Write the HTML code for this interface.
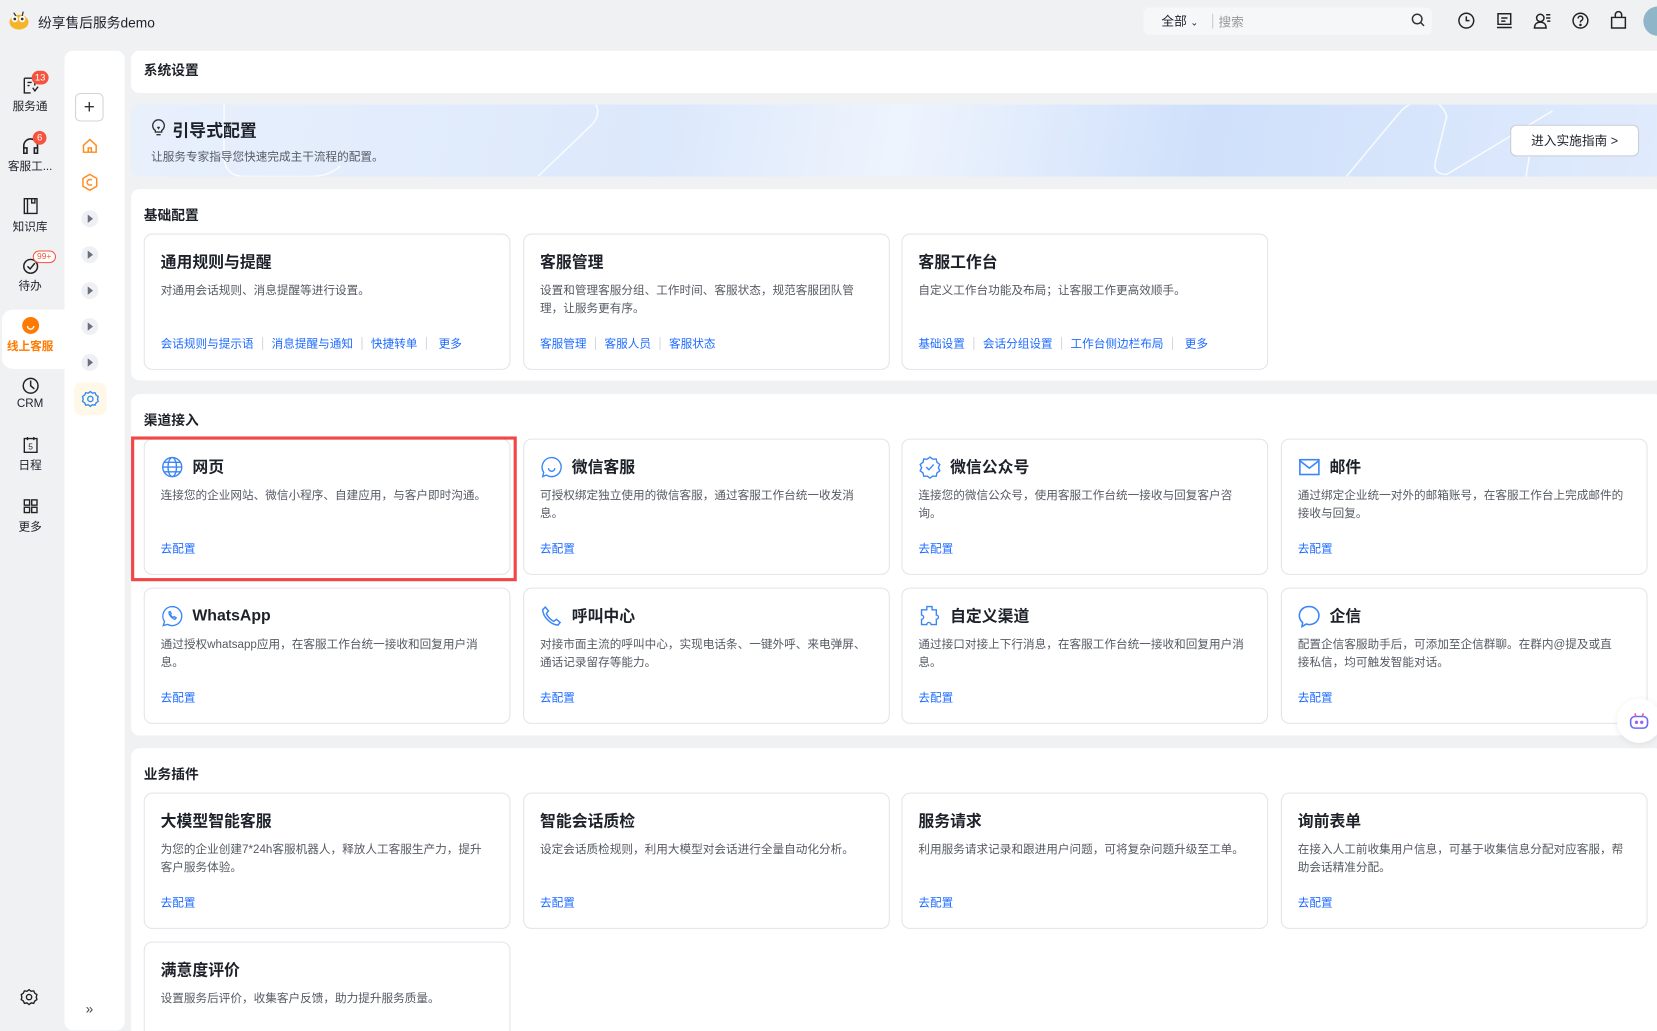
<!DOCTYPE html>
<html><head><meta charset="utf-8"><style>
*{box-sizing:border-box;margin:0;padding:0}
html,body{width:1657px;height:1031px;overflow:hidden;background:#f0f1f3}
body{font-family:"Liberation Sans","Noto Sans CJK SC",sans-serif;color:#1d2129}
#s{position:absolute;left:0;top:0;width:1568px;height:976px;overflow:hidden;transform:scale(1.0568);transform-origin:0 0}
.a{position:absolute}
.sec{position:absolute;left:124px;width:1450px;background:#fff;border-radius:8px}
.st{position:absolute;left:12px;font-size:13px;font-weight:bold}
.card{position:absolute;width:347px;height:129px;border:1px solid #e3e4ea;border-radius:8px;background:#fff}
.ct{position:absolute;left:15px;top:15px;font-size:15px;font-weight:bold;white-space:nowrap}
.cd{position:absolute;left:15px;top:45px;right:22px;font-size:11px;line-height:17px;color:#555a63}
.cl{position:absolute;left:15px;top:95px;font-size:11px;color:#1e6bff;white-space:nowrap}
.cl i{display:inline-block;width:1px;height:12px;background:#d6d8de;margin:0 8px;vertical-align:-2px}
.ic{position:absolute;left:15px;top:15px}
.ct2{left:45px}
.nav{position:absolute;left:0;width:57px;text-align:center;font-size:11px;color:#1d2129}
.nav svg{display:block;margin:0 auto 2px}
.badge{position:absolute;background:#f5533d;color:#fff;font-size:9px;border-radius:8px;padding:0 3px;line-height:13px;min-width:13px;text-align:center}
.tri{position:absolute;left:77px;width:16px;height:16px;border-radius:50%;background:#eef0f5}
.tri:after{content:"";position:absolute;left:6px;top:4px;border-left:5px solid #6b6f78;border-top:4px solid transparent;border-bottom:4px solid transparent}
</style></head><body><div id="s">
<svg class="a" style="left:7px;top:8px" width="22" height="22" viewBox="0 0 22 22"><ellipse cx="11" cy="13" rx="9" ry="7" fill="#f5b42a"/><circle cx="7" cy="10" r="3" fill="#fff"/><circle cx="14" cy="10" r="3" fill="#fff"/><circle cx="7" cy="10" r="1.3" fill="#333"/><circle cx="14" cy="10" r="1.3" fill="#333"/><path d="M6 4l2 3M15 3l-1 4" stroke="#333" stroke-width="1.2"/></svg>
<div class="a" style="left:36px;top:11px;font-size:13px">纷享售后服务demo</div>
<div class="a" style="left:1082px;top:7px;width:273px;height:26px;background:#f6f7f9;border-radius:5px"></div>
<div class="a" style="left:1099px;top:11px;font-size:12px">全部 <span style="font-size:9px">⌄</span></div>
<div class="a" style="left:1147px;top:13px;width:1px;height:14px;background:#ccc"></div>
<div class="a" style="left:1153px;top:12px;font-size:12px;color:#999">搜索</div>
<svg class="a" style="left:1335px;top:12px" width="14" height="14" viewBox="0 0 14 14" fill="none" stroke="#333" stroke-width="1.4"><circle cx="6" cy="6" r="4.5"/><path d="M9.5 9.5l3 3"/></svg>
<svg class="a" style="left:1379px;top:11px" width="17" height="17" viewBox="0 0 17 17" fill="none" stroke="#222" stroke-width="1.4"><circle cx="8.5" cy="8.5" r="7"/><path d="M8.5 4.5v4h3"/></svg>
<svg class="a" style="left:1415px;top:11px" width="17" height="17" viewBox="0 0 17 17" fill="none" stroke="#222" stroke-width="1.4"><path d="M2.5 2h12v10h-12zM1.5 15h14M5.5 6h6M5.5 9h4"/></svg>
<svg class="a" style="left:1451px;top:11px" width="17" height="17" viewBox="0 0 17 17" fill="none" stroke="#222" stroke-width="1.4"><circle cx="6.5" cy="6" r="3.5"/><path d="M1 15.5c0-4 2.5-5.5 5.5-5.5s5.5 1.5 5.5 5.5zM12 3h4M12 6h4M13 9h3"/></svg>
<svg class="a" style="left:1487px;top:11px" width="17" height="17" viewBox="0 0 17 17" fill="none" stroke="#222" stroke-width="1.4"><circle cx="8.5" cy="8.5" r="7"/><path d="M6.3 6.5a2.2 2.2 0 1 1 3 2c-.8.4-.8 1-.8 1.8"/><circle cx="8.5" cy="12.5" r=".5" fill="#222"/></svg>
<svg class="a" style="left:1523px;top:10px" width="17" height="18" viewBox="0 0 17 18" fill="none" stroke="#222" stroke-width="1.4"><path d="M2 6.5h13v10H2zM5.5 6.5V4a3 3 0 0 1 6 0v2.5"/></svg>
<div class="a" style="left:1555px;top:6px;width:28px;height:28px;border-radius:50%;background:#8fb6c8"></div>
<div class="a" style="left:2px;top:293px;width:60px;height:56px;background:#fff;border-radius:10px 0 0 10px"></div>
<div class="nav" style="top:72px"><svg width="18" height="18" viewBox="0 0 18 18" fill="none" stroke="#222" stroke-width="1.3"><path d="M3 2h10v7M3 2v14h6M6 6h4M6 9h2"/><path d="M11 11l2 3 3-4"/></svg>服务通</div>
<div class="badge" style="left:30px;top:67px">13</div>
<div class="nav" style="top:129px"><svg width="18" height="18" viewBox="0 0 18 18" fill="none" stroke="#222" stroke-width="1.5"><path d="M2.5 14V9a6.5 6.5 0 0 1 13 0v5M2.5 11h3v5h-3zM12.5 11h3v5h-3z"/></svg>客服工...</div>
<div class="badge" style="left:31px;top:124px">6</div>
<div class="nav" style="top:186px"><svg width="18" height="18" viewBox="0 0 18 18" fill="none" stroke="#222" stroke-width="1.3"><path d="M3 2h12v14H3zM6 2v14M10 2v4h3V2"/></svg>知识库</div>
<div class="nav" style="top:242px"><svg width="18" height="18" viewBox="0 0 18 18" fill="none" stroke="#222" stroke-width="1.4"><circle cx="9" cy="10" r="6.5"/><path d="M6 10l2.5 2.5L13 7"/></svg>待办</div>
<div class="badge" style="left:31px;top:237px;background:#fff;color:#f5533d;border:1px solid #f5533d;font-size:8px;line-height:10px">99+</div>
<div class="nav" style="top:299px;color:#ff7a00;font-weight:bold"><svg width="18" height="18" viewBox="0 0 18 18"><circle cx="9" cy="9" r="8" fill="#ff7a00"/><path d="M6 9.5a3 3 0 0 0 6 0" stroke="#fff" stroke-width="1.3" fill="none"/></svg>线上客服</div>
<div class="nav" style="top:356px"><svg width="18" height="18" viewBox="0 0 18 18" fill="none" stroke="#222" stroke-width="1.4"><circle cx="9" cy="9" r="7"/><path d="M9 4v5l3.5 3"/></svg>CRM</div>
<div class="nav" style="top:412px"><svg width="18" height="18" viewBox="0 0 18 18" fill="none" stroke="#222" stroke-width="1.3"><path d="M3 3h12v13H3zM6 1.5v3M12 1.5v3"/><text x="9" y="13.5" font-size="8" text-anchor="middle" fill="#222" stroke="none" font-family="Liberation Sans">5</text></svg>日程</div>
<div class="nav" style="top:470px"><svg width="18" height="18" viewBox="0 0 18 18" fill="none" stroke="#222" stroke-width="1.3"><rect x="3" y="3" width="5" height="5"/><rect x="10" y="3" width="5" height="5"/><rect x="3" y="10" width="5" height="5"/><rect x="10" y="10" width="5" height="5"/></svg>更多</div>
<svg class="a" style="left:19px;top:935px" width="17" height="17" viewBox="0 0 17 17" fill="none" stroke="#222" stroke-width="1.3"><circle cx="8.5" cy="8.5" r="2.5"/><path d="M8.5 1.5l2 1.5 2.4-.4 1 2.2 2 1.3-.6 2.4.6 2.4-2 1.3-1 2.2-2.4-.4-2 1.5-2-1.5-2.4.4-1-2.2-2-1.3.6-2.4-.6-2.4 2-1.3 1-2.2 2.4.4z"/></svg>
<div class="a" style="left:61px;top:48px;width:57px;height:927px;background:#fff;border-radius:8px"></div>
<div class="a" style="left:71px;top:88px;width:27px;height:27px;border:1px solid #d0d3da;border-radius:5px;text-align:center;line-height:24px;font-size:18px;color:#333">+</div>
<svg class="a" style="left:77px;top:130px" width="16" height="16" viewBox="0 0 16 16" fill="none" stroke="#ff8a1f" stroke-width="1.4"><path d="M2 7.5L8 2l6 5.5V14H2zM6.5 14v-4h3v4"/></svg>
<svg class="a" style="left:77px;top:164px" width="16" height="17" viewBox="0 0 16 17" fill="none" stroke="#ff8a1f" stroke-width="1.4"><path d="M8 1l6.5 3.8v7.4L8 16l-6.5-3.8V4.8z"/><path d="M10 6.5a2.7 2.7 0 1 0 0 4"/></svg>
<div class="tri" style="top:199px"></div><div class="tri" style="top:233px"></div><div class="tri" style="top:267px"></div><div class="tri" style="top:301px"></div><div class="tri" style="top:335px"></div>
<div class="a" style="left:70px;top:362px;width:31px;height:31px;background:#fff7e8;border-radius:7px"></div>
<svg class="a" style="left:77px;top:369px" width="17" height="17" viewBox="0 0 17 17" fill="none" stroke="#2f8cf5" stroke-width="1.3"><circle cx="8.5" cy="8.5" r="2.5"/><path d="M8.5 1.5l2 1.5 2.4-.4 1 2.2 2 1.3-.6 2.4.6 2.4-2 1.3-1 2.2-2.4-.4-2 1.5-2-1.5-2.4.4-1-2.2-2-1.3.6-2.4-.6-2.4 2-1.3 1-2.2 2.4.4z"/></svg>
<div class="a" style="left:81px;top:947px;font-size:13px;color:#444">»</div>
<div class="sec" style="top:48px;height:40px"><div class="st" style="top:8px">系统设置</div></div>
<div class="sec" style="top:99px;height:68px;background:linear-gradient(100deg,#e8f0fc 0%,#dce8fb 35%,#eef4fd 50%,#cfe0fb 70%,#e0ebfc 100%);overflow:hidden">
<svg class="a" style="left:0;top:0" width="1450" height="68" fill="none" stroke="#fff" stroke-width="1.5" opacity=".8"><path d="M88 0v48q0 20 20 20h60q20 0 30 -10M440 0q5 10-5 20l-50 48M1150 68l50-60q10-12 25-12t20 15l-10 40q-5 15 10 15l100-60M1320 68l5-30"/></svg>
<svg class="a" style="left:18px;top:12px" width="16" height="18" viewBox="0 0 16 18" fill="none" stroke="#333" stroke-width="1.3"><path d="M5 12.5a5.5 5.5 0 1 1 6 0V14H5zM6 16.5h4M7 9l1 1.5 1-1.5"/></svg>
<div class="a" style="left:39px;top:11px;font-size:16px;font-weight:bold;color:#1d2129">引导式配置</div>
<div class="a" style="left:19px;top:41px;font-size:11px;color:#555a63">让服务专家指导您快速完成主干流程的配置。</div>
<div class="a" style="left:1305px;top:19px;width:122px;height:30px;background:#fff;border:1px solid #c9cdd4;border-radius:6px;font-size:12px;text-align:center;line-height:28px">进入实施指南 &gt;</div>
</div>
<div class="sec" style="top:179px;height:181px"><div class="st" style="top:14px">基础配置</div>
<div class="card" style="left:12px;top:42px"><div class="ct">通用规则与提醒</div><div class="cd">对通用会话规则、消息提醒等进行设置。</div><div class="cl">会话规则与提示语<i></i>消息提醒与通知<i></i>快捷转单<i></i> 更多</div></div>
<div class="card" style="left:371px;top:42px"><div class="ct">客服管理</div><div class="cd">设置和管理客服分组、工作时间、客服状态，规范客服团队管理，让服务更有序。</div><div class="cl">客服管理<i></i>客服人员<i></i>客服状态</div></div>
<div class="card" style="left:729px;top:42px"><div class="ct">客服工作台</div><div class="cd">自定义工作台功能及布局；让客服工作更高效顺手。</div><div class="cl">基础设置<i></i>会话分组设置<i></i>工作台侧边栏布局<i></i> 更多</div></div>
</div>
<div class="sec" style="top:373px;height:323px"><div class="st" style="top:14px">渠道接入</div>
<div class="card" style="left:12px;top:42px"><svg class="ic" width="22" height="22" viewBox="0 0 22 22" fill="none" stroke="#3b86f7" stroke-width="1.3"><circle cx="11" cy="11" r="9"/><ellipse cx="11" cy="11" rx="4" ry="9"/><path d="M2 11h18M3.5 6.5h15M3.5 15.5h15"/></svg><div class="ct ct2">网页</div><div class="cd">连接您的企业网站、微信小程序、自建应用，与客户即时沟通。</div><div class="cl">去配置</div></div>
<div class="card" style="left:371px;top:42px"><svg class="ic" width="22" height="22" viewBox="0 0 22 22" fill="none" stroke="#3b86f7" stroke-width="1.3"><path d="M11 2a9 9 0 1 1-5 16.5L2.5 20l1-4A9 9 0 0 1 11 2z"/><path d="M8 12a3 3 0 0 0 6 0"/></svg><div class="ct ct2">微信客服</div><div class="cd">可授权绑定独立使用的微信客服，通过客服工作台统一收发消息。</div><div class="cl">去配置</div></div>
<div class="card" style="left:729px;top:42px"><svg class="ic" width="22" height="22" viewBox="0 0 22 22" fill="none" stroke="#3b86f7" stroke-width="1.3"><path d="M11 1.5l2.6 2 3.3-.2.7 3.2 2.7 2-1.4 3 1.4 3-2.7 2-.7 3.2-3.3-.2-2.6 2-2.6-2-3.3.2-.7-3.2-2.7-2 1.4-3-1.4-3 2.7-2 .7-3.2 3.3.2z"/><path d="M7.5 11l2.5 2.5 4.5-5"/></svg><div class="ct ct2">微信公众号</div><div class="cd">连接您的微信公众号，使用客服工作台统一接收与回复客户咨询。</div><div class="cl">去配置</div></div>
<div class="card" style="left:1088px;top:42px"><svg class="ic" width="22" height="22" viewBox="0 0 22 22" fill="none" stroke="#3b86f7" stroke-width="1.5"><rect x="2" y="4" width="18" height="14"/><path d="M2 5l9 7 9-7"/></svg><div class="ct ct2">邮件</div><div class="cd">通过绑定企业统一对外的邮箱账号，在客服工作台上完成邮件的接收与回复。</div><div class="cl">去配置</div></div>
<div class="card" style="left:12px;top:183px"><svg class="ic" width="22" height="22" viewBox="0 0 22 22" fill="none" stroke="#3b86f7" stroke-width="1.3"><path d="M11 2a9 9 0 1 1-4.5 16.8L2.5 20l1.2-3.8A9 9 0 0 1 11 2z"/><path d="M8 7c-.5 2 2 6 5.5 7l1.2-1.5-2-1-1 .7c-1-.5-2-1.5-2.4-2.5l.7-1-1-2z"/></svg><div class="ct ct2" style="top:17px">WhatsApp</div><div class="cd">通过授权whatsapp应用，在客服工作台统一接收和回复用户消息。</div><div class="cl">去配置</div></div>
<div class="card" style="left:371px;top:183px"><svg class="ic" width="22" height="22" viewBox="0 0 22 22" fill="none" stroke="#3b86f7" stroke-width="1.4"><path d="M5 2.5l3 3.5-2 2.5c1 3 4 6 7 7.5l2.5-2 3.5 3-2 2.5C10 19 3 12 2.5 5z"/></svg><div class="ct ct2">呼叫中心</div><div class="cd">对接市面主流的呼叫中心，实现电话条、一键外呼、来电弹屏、通话记录留存等能力。</div><div class="cl">去配置</div></div>
<div class="card" style="left:729px;top:183px"><svg class="ic" width="22" height="22" viewBox="0 0 22 22" fill="none" stroke="#3b86f7" stroke-width="1.3"><path d="M8 2h5v3a2 2 0 1 0 0 0h0v0h4v5a2 2 0 1 1 0 4v5h-5a2 2 0 1 0-4 0H3v-5a2 2 0 1 0 0-4V5h5a2 2 0 1 1 0 0z"/></svg><div class="ct ct2">自定义渠道</div><div class="cd">通过接口对接上下行消息，在客服工作台统一接收和回复用户消息。</div><div class="cl">去配置</div></div>
<div class="card" style="left:1088px;top:183px"><svg class="ic" width="22" height="22" viewBox="0 0 22 22" fill="none" stroke="#3b86f7" stroke-width="1.5"><path d="M11 2a9 8.5 0 1 1-3 16.5L4 21l.6-4A8.5 8.5 0 0 1 11 2z"/></svg><div class="ct ct2">企信</div><div class="cd">配置企信客服助手后，可添加至企信群聊。在群内@提及或直接私信，均可触发智能对话。</div><div class="cl">去配置</div></div>
</div>
<div class="a" style="left:124px;top:413px;width:365px;height:137px;border:3px solid #f04848"></div>
<div class="sec" style="top:708px;height:280px"><div class="st" style="top:14px">业务插件</div>
<div class="card" style="left:12px;top:42px"><div class="ct">大模型智能客服</div><div class="cd">为您的企业创建7*24h客服机器人，释放人工客服生产力，提升客户服务体验。</div><div class="cl">去配置</div></div>
<div class="card" style="left:371px;top:42px"><div class="ct">智能会话质检</div><div class="cd">设定会话质检规则，利用大模型对会话进行全量自动化分析。</div><div class="cl">去配置</div></div>
<div class="card" style="left:729px;top:42px"><div class="ct">服务请求</div><div class="cd">利用服务请求记录和跟进用户问题，可将复杂问题升级至工单。</div><div class="cl">去配置</div></div>
<div class="card" style="left:1088px;top:42px"><div class="ct">询前表单</div><div class="cd">在接入人工前收集用户信息，可基于收集信息分配对应客服，帮助会话精准分配。</div><div class="cl">去配置</div></div>
<div class="card" style="left:12px;top:183px"><div class="ct">满意度评价</div><div class="cd">设置服务后评价，收集客户反馈，助力提升服务质量。</div><div class="cl">去配置</div></div>
</div>
<div class="a" style="left:1530px;top:661px;width:42px;height:42px;border-radius:50%;background:#fff;box-shadow:0 1px 6px rgba(0,0,0,.08)"></div>
<svg class="a" style="left:1541px;top:673px" width="20" height="18" viewBox="0 0 20 18" fill="none" stroke="#a35cf5" stroke-width="1.5"><rect x="2" y="5" width="16" height="11" rx="4" stroke="#6a6cf6"/><path d="M6 2l1 3M14 2l-1 3" stroke="#f05a9a"/><circle cx="7.5" cy="10.5" r=".8" fill="#6a6cf6"/><circle cx="12.5" cy="10.5" r=".8" fill="#6a6cf6"/></svg>
</div></body></html>
